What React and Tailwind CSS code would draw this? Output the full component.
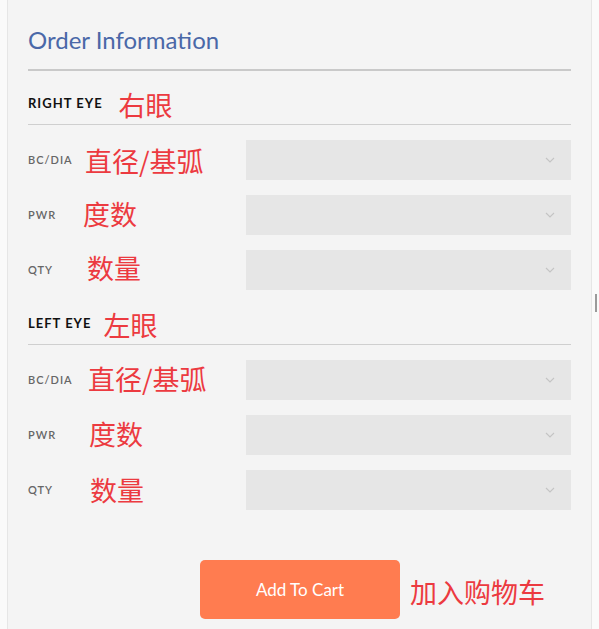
import React from "react";

const cjk = { fontFamily: '"Noto Sans CJK SC", "Noto Sans", sans-serif' };

function Chevron() {
  return (
    <svg width="10" height="6" viewBox="0 0 10 6" fill="none" className="mr-[16px]">
      <path d="M1 1 L5 5 L9 1" stroke="#c4c4c4" strokeWidth="1.1" />
    </svg>
  );
}

function Row({ label, zh, labelW, zhPos }) {
  return (
    <div className="flex items-center h-[40px]">
      <div className={`${labelW} shrink-0 text-[11px] font-semibold tracking-[1px] text-[#666]`}>{label}</div>
      <div className={`${zhPos} text-[27px] leading-none text-[#ec3a40]`} style={cjk}>{zh}</div>
      <div className="ml-auto w-[325px] h-[40px] bg-[#e6e6e6] flex items-center justify-end">
        <Chevron />
      </div>
    </div>
  );
}

function Header({ en, zh, gap }) {
  return (
    <div className="flex items-center h-[41px] border-b border-[#cfcfcf]">
      <div className="text-[13px] font-bold tracking-[1px] text-[#111]">{en}</div>
      <div className={`${gap} text-[27px] leading-none text-[#ec3a40]`} style={cjk}>{zh}</div>
    </div>
  );
}

export default function App() {
  return (
    <div className="w-[599px] h-[629px] bg-[#fafafa] overflow-hidden flex" style={{ fontFamily: 'Lato, "Open Sans", sans-serif' }}>
      <div className="ml-[7px] w-[585px] h-full bg-[#f4f4f4] border-l border-r border-[#e6e6e6] px-[20px]">
        <div className="pt-[26px] text-[24px] leading-[28px] text-[#4a68a8]">Order Information</div>
        <div className="mt-[15px] h-[2px] bg-[#c9c9c9]" />
        <div className="mt-[13px]">
          <Header en="RIGHT EYE" zh="右眼" gap="ml-[16px]" />
        </div>
        <div className="mt-[15px] flex flex-col gap-[15px]">
          <Row label="BC/DIA" zh="直径/基弧" labelW="w-[57px]" zhPos="" />
          <Row label="PWR" zh="度数" labelW="w-[55px]" zhPos="-mt-[3px]" />
          <Row label="QTY" zh="数量" labelW="w-[59px]" zhPos="-mt-[5px]" />
        </div>
        <div className="mt-[14px]">
          <Header en="LEFT EYE" zh="左眼" gap="ml-[12px]" />
        </div>
        <div className="mt-[15px] flex flex-col gap-[15px]">
          <Row label="BC/DIA" zh="直径/基弧" labelW="w-[60px]" zhPos="-mt-[3px]" />
          <Row label="PWR" zh="度数" labelW="w-[61px]" zhPos="-mt-[3px]" />
          <Row label="QTY" zh="数量" labelW="w-[62px]" zhPos="-mt-[2px]" />
        </div>
        <div className="mt-[50px] flex items-center">
          <div className="ml-[172px] w-[200px] h-[59px] rounded-[5px] bg-[#ff7c50] flex items-center justify-center text-[17px] text-white">
            Add To Cart
          </div>
          <div className="ml-[10px] mt-[3px] text-[27px] leading-none text-[#ec3a40]" style={cjk}>加入购物车</div>
        </div>
      </div>
      <div className="flex-1 pt-[294px] pl-[3px]">
        <div className="w-[2px] h-[18px] bg-[#9a9a9a]" />
      </div>
    </div>
  );
}
